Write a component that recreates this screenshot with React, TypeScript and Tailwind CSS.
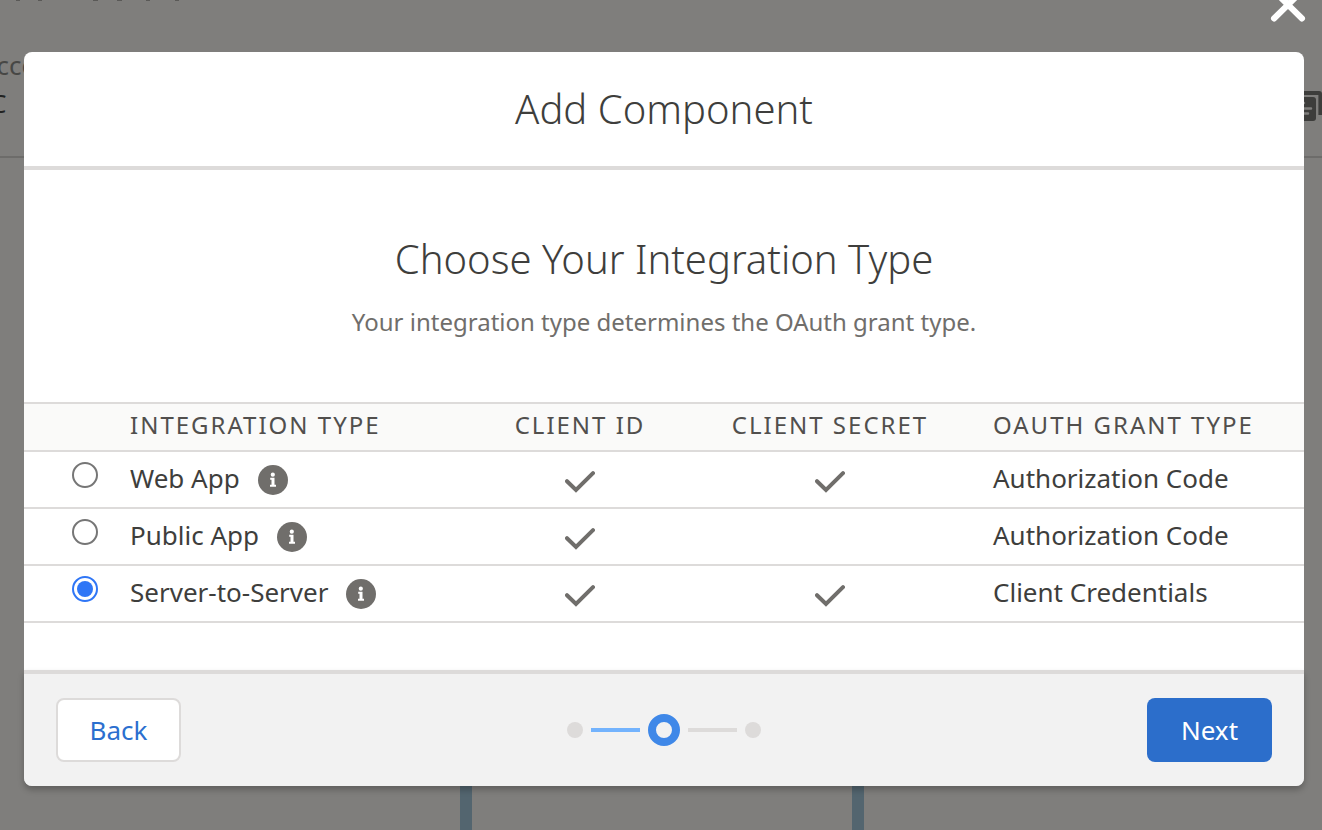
import React from "react";

type Row = { id: string; name: string; secret: boolean; grant: string };

const rows: Row[] = [
  { id: "web", name: "Web App", secret: true, grant: "Authorization Code" },
  { id: "public", name: "Public App", secret: false, grant: "Authorization Code" },
  { id: "server", name: "Server-to-Server", secret: true, grant: "Client Credentials" },
];

function Check() {
  return (
    <svg className="mx-auto h-[22px] w-[30px]" viewBox="0 0 30 22" fill="none" stroke="#706e6b" role="img" aria-label="Required">
      <path d="M2 10.2 L11 19 L28 2.200" strokeWidth="4" strokeLinecap="round" strokeLinejoin="miter" />
    </svg>
  );
}

function InfoIcon() {
  return (
    <svg className="size-[30px]" viewBox="0 0 30 30" aria-hidden="true">
      <circle cx="15" cy="15" r="15" fill="#706e6b" />
      <circle cx="14.8" cy="9.7" r="2.100" fill="#fff" />
      <path d="M12.2 12.800h4.300v6.900h1.500v2h-6v-2h1.500v-4.900h-1.300z" fill="#fff" />
    </svg>
  );
}

function Backdrop() {
  return (
    <div className="absolute inset-0 flex flex-col overflow-hidden" aria-hidden="true">
      <div className="flex h-[158px] shrink-0 items-start justify-between border-b-2 border-[#6d6c6a]">
        <div className="flex flex-col">
          <svg className="h-[47px] w-[200px]" viewBox="0 0 200 47" fill="#5a5957">
            <rect x="16" width="4" height="1" />
            <rect x="38" width="4" height="1" />
            <rect x="93" width="5" height="1" />
            <rect x="117" width="5" height="1" />
            <rect x="146" width="4" height="1" />
            <rect x="175" width="4" height="1" />
          </svg>
          <span className="-ml-[20px] text-[26px] leading-9 text-[#474745]">Account</span>
          <span className="-ml-[10px] text-[26px] leading-10 text-[#222221]">C</span>
        </div>
        <svg className="mt-[91px] h-[30px] w-[36px]" viewBox="0 0 36 30" fill="none">
          <path d="M8 0h25a3 3 0 0 1 3 3v21h-3.600V4H8z" fill="#3d3d3b" />
          <rect x="0" y="6" width="30" height="24" rx="3" fill="#3d3d3b" />
          <path d="M4 12h14M4 17.500h21M4 22.500h18" stroke="#7f7e7c" strokeWidth="2.500" strokeLinecap="round" />
        </svg>
      </div>
      <div className="flex flex-1">
        <div className="w-[472px] border-r-12 border-[#53656f]" />
        <div className="w-[392px] border-r-12 border-[#53656f]" />
      </div>
    </div>
  );
}

export default function App() {
  const [selected, setSelected] = React.useState("server");
  return (
    <div className="relative min-h-screen bg-[#7f7e7c] font-['Noto_Sans','Open_Sans',sans-serif] text-[#3e3e3c]">
      <Backdrop />
      <button type="button" aria-label="Close" className="absolute top-[-13px] right-[16px] text-white">
        <svg className="size-[36px]" viewBox="0 0 36 36" fill="none" stroke="currentColor" strokeWidth="6" strokeLinecap="round">
          <path d="M4 4 L32 31.500 M32 4 L4 31.500" />
        </svg>
      </button>
      <div className="relative pt-[52px] pr-[18px] pb-11 pl-6">
        <div role="dialog" aria-labelledby="dialog-title" className="rounded-lg bg-white">
          <header className="border-b-4 border-[#dddbda] py-8 text-center">
            <h1 id="dialog-title" className="text-[40px] leading-[50px] font-light">Add Component</h1>
          </header>
          <div className="pt-16 pb-[47px]">
            <h2 className="text-center text-[40px] leading-[50px] font-light">Choose Your Integration Type</h2>
            <p className="mt-5 mb-[62px] text-center text-2xl leading-9 text-[#706e6b]">
              Your integration type determines the OAuth grant type.
            </p>
            <table className="w-full table-fixed border-collapse text-left text-[26px] leading-9">
              <colgroup>
                <col className="w-[106px]" />
                <col />
                <col className="w-[174px]" />
                <col className="w-[326px]" />
                <col className="w-[311px]" />
              </colgroup>
              <thead>
                <tr className="h-12 border-y-2 border-[#dddbda] bg-[#fafaf9] text-2xl leading-9 tracking-[2px] whitespace-nowrap text-[#514f4d] uppercase">
                  <th aria-label="Select" className="p-0" />
                  <th className="p-0 pb-1 font-normal">Integration Type</th>
                  <th className="p-0 pb-1 text-center font-normal">Client ID</th>
                  <th className="p-0 pb-1 text-center font-normal">Client Secret</th>
                  <th className="p-0 pb-1 font-normal">OAuth Grant Type</th>
                </tr>
              </thead>
              <tbody>
                {rows.map((row) => (
                  <tr key={row.id} className="h-[57px] border-b-2 border-[#dddbda]">
                    <td className="p-0 pt-[10px] pl-12 align-top">
                      <input
                        type="radio"
                        id={row.id}
                        name="integration"
                        checked={selected === row.id}
                        onChange={() => setSelected(row.id)}
                        className="block size-[26px] appearance-none rounded-full border-2 border-[#767676] bg-white bg-clip-content p-[3px] checked:border-[#2f76f6] checked:bg-[#2f76f6]"
                      />
                    </td>
                    <td className="p-0 pb-1">
                      <div className="flex items-center gap-[18px]">
                        <label htmlFor={row.id}>{row.name}</label>
                        <button type="button" aria-label={"About " + row.name} className="pt-1"><InfoIcon /></button>
                      </div>
                    </td>
                    <td className="p-0 pt-1"><Check /></td>
                    <td className="p-0 pt-1">{row.secret && <Check />}</td>
                    <td className="p-0 pb-1">{row.grant}</td>
                  </tr>
                ))}
              </tbody>
            </table>
          </div>
          <footer className="flex items-center justify-between rounded-b-lg border-t-4 border-[#dddbda] bg-[#f2f2f2] px-8 py-6 text-[26px] shadow-[0_4px_6px_rgba(0,0,0,0.24)]">
            <button type="button" className="h-16 w-[125px] rounded-lg border-2 border-[#dddbda] bg-white text-[#2b6fcf]">Back</button>
            <ol className="flex items-center gap-2" aria-label="Step 2 of 3">
              <li className="size-4 rounded-full bg-[#dddbda]" />
              <li className="h-1 w-[49px] bg-[#73b3fd]" aria-hidden="true" />
              <li className="size-8 rounded-full border-8 border-[#3f88e8]" aria-current="step" />
              <li className="h-1 w-[49px] bg-[#dddbda]" aria-hidden="true" />
              <li className="size-4 rounded-full bg-[#dddbda]" />
            </ol>
            <button type="button" className="h-16 w-[125px] rounded-lg bg-[#2c6ecb] text-white">Next</button>
          </footer>
        </div>
      </div>
    </div>
  );
}
